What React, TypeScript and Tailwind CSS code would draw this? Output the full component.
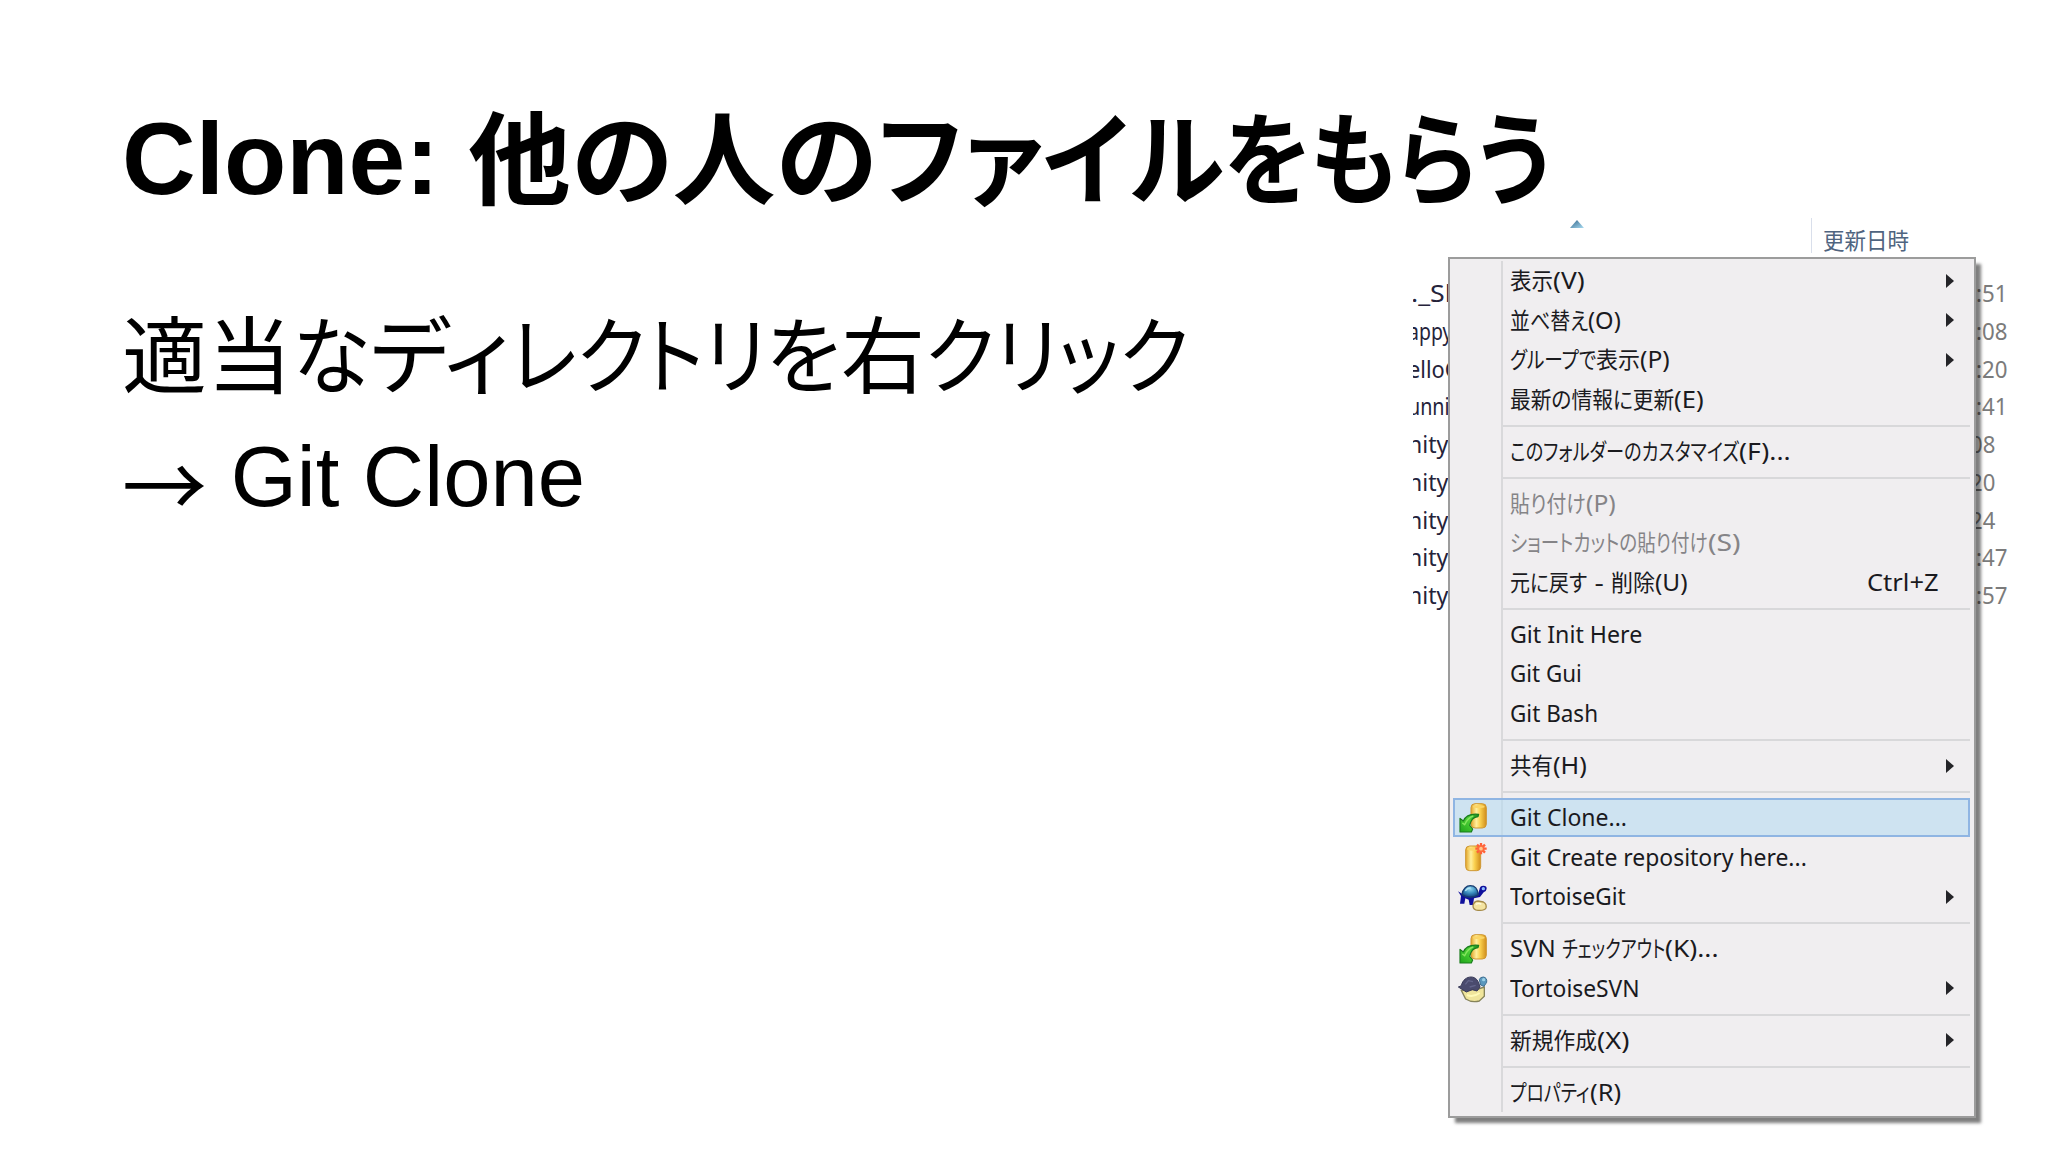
import { ReactNode, useLayoutEffect, useRef, useState } from "react";
import clsx from "clsx";

type Run = [text: string, width: number];

type MenuEntry =
    | "separator"
    | {
          runs: Run[];
          icon?: ReactNode;
          shortcut?: Run;
          submenu?: boolean;
          disabled?: boolean;
          active?: boolean;
      };

// Squeezes or stretches a piece of text so that it fills exactly `width` pixels.
function FitText({ text, width }: { text: string; width: number }) {
    const ref = useRef<HTMLSpanElement>(null);
    const [scale, setScale] = useState(1);

    useLayoutEffect(() => {
        if (ref.current) setScale(width / ref.current.offsetWidth);
    }, [text, width]);

    return (
        <span className="inline-block whitespace-pre" style={{ width }}>
            <span ref={ref} className="inline-block origin-left" style={{ transform: `scaleX(${scale})` }}>
                {text}
            </span>
        </span>
    );
}

function FitLine({ runs }: { runs: Run[] }) {
    return (
        <span className="flex items-baseline">
            {runs.map(([text, width], i) => (
                <FitText key={i} text={text} width={width} />
            ))}
        </span>
    );
}

function Gradients() {
    return (
        <svg className="absolute h-0 w-0" aria-hidden="true">
            <defs>
                <linearGradient id="gold" x1="0" x2="1" y1="0" y2="0">
                    <stop offset="0" stopColor="#e2a52a" />
                    <stop offset="0.35" stopColor="#ffef9c" />
                    <stop offset="0.6" stopColor="#fad04e" />
                    <stop offset="1" stopColor="#d08e1c" />
                </linearGradient>
                <linearGradient id="leaf" x1="0" x2="1" y1="1" y2="0">
                    <stop offset="0" stopColor="#1fa51a" />
                    <stop offset="0.6" stopColor="#4fd238" />
                    <stop offset="1" stopColor="#178a1c" />
                </linearGradient>
                <radialGradient id="shell" cx="0.5" cy="0.3" r="0.7">
                    <stop offset="0" stopColor="#8fd4ee" />
                    <stop offset="0.5" stopColor="#3c8fc0" />
                    <stop offset="1" stopColor="#14407c" />
                </radialGradient>
                <linearGradient id="sort" x1="0" x2="1" y1="0" y2="1">
                    <stop offset="0" stopColor="#2f6288" />
                    <stop offset="1" stopColor="#a9dcf2" />
                </linearGradient>
            </defs>
        </svg>
    );
}

function CheckoutIcon() {
    return (
        <svg viewBox="0 0 90 90" className="size-[30px]">
            <rect x="39" y="2" width="46" height="73" rx="12" fill="url(#gold)" stroke="#cf9733" strokeWidth="3" />
            <ellipse cx="62" cy="11" rx="18" ry="5" fill="#fbd566" />
            <path
                d="M6 46 L16 54 C22 40 36 31 62 34 L60 41 C46 42 38 52 35 67 L44 78 L40 87 L6 87 Z"
                fill="url(#leaf)"
                stroke="#1a7d1c"
                strokeWidth="3.5"
                strokeLinejoin="round"
            />
            <path d="M13 60 L20 65 C27 50 34 42 46 39" fill="none" stroke="#86e65f" strokeWidth="4" />
        </svg>
    );
}

function CreateIcon() {
    return (
        <svg viewBox="0 0 90 90" className="size-[30px]">
            <rect x="23" y="12" width="45" height="74" rx="12" fill="url(#gold)" stroke="#cf9733" strokeWidth="3" />
            <ellipse cx="44" cy="21" rx="17" ry="5" fill="#fbd566" />
            <path d="M69 3 V37 M52 20 H86 M57 8 L81 32 M81 8 L57 32" stroke="#ff6038" strokeWidth="7" />
            <circle cx="69" cy="20" r="8" fill="#ffc48a" stroke="#ff6a3c" strokeWidth="5" />
        </svg>
    );
}

function TortoiseGitIcon() {
    return (
        <svg viewBox="0 0 90 90" className="size-[30px]">
            <path
                d="M0 28 L12 35 H60 L64 24 Q65 11 76 11 Q87 11 86 20 Q85 29 77 31 L66 45 L48 49 L45 69 H35 L32 53 L22 49 L19 65 H6 L9 42 Z"
                fill="#10109c"
            />
            <path d="M12 38 C14 20 26 11 37 11 C50 11 59 21 61 38 C48 48 26 48 12 38 Z" fill="url(#shell)" stroke="#183c70" strokeWidth="4" />
            <path d="M22 27 Q28 17 38 18" fill="none" stroke="#b5e4f4" strokeWidth="4" />
            <circle cx="76" cy="20" r="5" fill="#8cbcff" />
            <path d="M45 71 Q47 58 60 57 L76 60 Q87 66 84 78 Q79 87 60 85 Q45 84 45 71 Z" fill="#f4e3a0" stroke="#a58a48" strokeWidth="4" />
            <path d="M53 67 Q60 63 70 66" fill="none" stroke="#fffbe0" strokeWidth="4" />
        </svg>
    );
}

function TortoiseSvnIcon() {
    return (
        <svg viewBox="0 0 90 90" className="size-[30px] overflow-visible">
            <path d="M10 52 L23 78 Q42 90 64 84 L79 70 L79 42 L61 48 Z" fill="#f0e59c" stroke="#85825a" strokeWidth="4" />
            <path d="M27 66 Q45 74 65 60" fill="none" stroke="#fffab8" strokeWidth="6" />
            <path d="M1 42 L10 38 C14 20 27 12 39 12 C54 12 62 24 66 42 L57 54 L43 50 L25 57 Z" fill="#4a4b6e" stroke="#393a58" strokeWidth="3" />
            <path d="M22 34 L31 23 L45 26 M35 42 L53 37" fill="none" stroke="#63658a" strokeWidth="4" />
            <path d="M64 20 Q66 12 76 12 Q88 14 86 28 L78 40 L68 36 Z" fill="#5a97bd" stroke="#3d6f92" strokeWidth="3" />
            <circle cx="77" cy="20" r="5" fill="#9bd0e6" />
        </svg>
    );
}

const titleRuns: Run[] = [
    ["他の人の", 409],
    ["ファイル", 347],
    ["をもらう", 327]
];

const bodyRuns: Run[] = [
    ["適当", 170],
    ["な", 78],
    ["ディ", 140],
    ["レクトリ", 256],
    ["を", 75],
    ["右", 84],
    ["クリック", 264]
];

const menu: MenuEntry[] = [
    { runs: [["表示", 43], ["(V)", 32]], submenu: true },
    { runs: [["並べ替え", 78], ["(O)", 33]], submenu: true },
    { runs: [["グループで", 86], ["表示", 44], ["(P)", 30]], submenu: true },
    { runs: [["最新の情報に更新", 164], ["(E)", 30]] },
    "separator",
    { runs: [["このフォルダーのカスタマイズ", 229], ["(F)...", 52]] },
    "separator",
    { runs: [["貼り付け", 76], ["(P)", 30]], disabled: true },
    { runs: [["ショートカットの貼り付け", 198], ["(S)", 32]], disabled: true },
    { runs: [["元に戻す", 77], [" - ", 24], ["削除", 44], ["(U)", 33]], shortcut: ["Ctrl+Z", 72] },
    "separator",
    { runs: [["Git Init Here", 132]] },
    { runs: [["Git Gui", 72]] },
    { runs: [["Git Bash", 88]] },
    "separator",
    { runs: [["共有", 43], ["(H)", 34]], submenu: true },
    "separator",
    { runs: [["Git Clone...", 117]], icon: <CheckoutIcon />, active: true },
    { runs: [["Git Create repository here...", 297]], icon: <CreateIcon /> },
    { runs: [["TortoiseGit", 116]], icon: <TortoiseGitIcon />, submenu: true },
    "separator",
    { runs: [["SVN ", 52], ["チェックアウト", 103], ["(K)...", 54]], icon: <CheckoutIcon /> },
    { runs: [["TortoiseSVN", 130]], icon: <TortoiseSvnIcon />, submenu: true },
    "separator",
    { runs: [["新規作成", 87], ["(X)", 32]], submenu: true },
    "separator",
    { runs: [["プロパティ", 80], ["(R)", 31]] }
];

const files: { name: Run; time: Run; short?: boolean }[] = [
    { name: ["._Sh", 50], time: [":51", 31] },
    { name: ["appy", 44], time: [":08", 31] },
    { name: ["elloG", 53], time: [":20", 31] },
    { name: ["unnin", 54], time: [":41", 31] },
    { name: ["nity", 40], time: ["08", 25], short: true },
    { name: ["nity", 40], time: ["20", 25], short: true },
    { name: ["nity", 40], time: ["24", 25], short: true },
    { name: ["nity", 40], time: [":47", 31] },
    { name: ["nity", 40], time: [":57", 31] }
];

function FileList() {
    return (
        <div className="w-full overflow-hidden">
            <div className="flex h-[56px] justify-between pr-[139px]">
                <svg viewBox="0 0 14 8" className="ml-[157px] mt-0.5 h-2 w-3.5">
                    <path d="M0 8 L7 0 L14 8 Z" fill="url(#sort)" />
                </svg>
                <div className="h-[35px] border-l border-[#d9dfeb] pl-[11px] leading-[44px] text-[#4f6480]">
                    <FitLine runs={[["更新日時", 86]]} />
                </div>
            </div>
            {files.map(({ name, time, short }, i) => (
                <div key={i} className="flex h-[37.75px] justify-between leading-[38px]">
                    <div className={clsx("text-[#25233a]", i === 0 ? "-ml-0.5" : "-ml-[5px]")}>
                        <FitLine runs={[name]} />
                    </div>
                    <div className={clsx("text-[#7b7b7b]", short ? "pr-[53px]" : "pr-[41px]")}>
                        <FitLine runs={[time]} />
                    </div>
                </div>
            ))}
        </div>
    );
}

function ContextMenu() {
    return (
        <div className="absolute left-[35px] top-[39px] w-[528px] border-2 border-[#9c9c9c] bg-[#f0eef0] pb-1 pl-[3px] pr-1 pt-0.5 text-[#1a1a1e] shadow-[6px_6px_3px_-1px_rgba(0,0,0,0.5)]">
            <div className="bg-[linear-gradient(to_right,transparent_48px,#d9d9db_48px,#d9d9db_50px,transparent_50px)]">
                {menu.map((entry, i) =>
                    entry === "separator" ? (
                        <div key={i} className="flex h-[12.75px] items-center pl-[50px] pt-px">
                            <div className="h-0.5 w-full bg-[#d8d8da]" />
                        </div>
                    ) : (
                        <div
                            key={i}
                            className={clsx(
                                "flex h-[39.45px] items-center leading-[39px]",
                                entry.active && "bg-[#b3daf2]/55 outline-2 -outline-offset-2 outline-[#8fb5e3]",
                                entry.disabled && "text-[#858487]"
                            )}
                        >
                            <div className="flex w-[57px] shrink-0 pl-[5px]">{entry.icon}</div>
                            <FitLine runs={entry.runs} />
                            <div className="ml-auto flex pr-4">
                                {entry.shortcut && (
                                    <div className="pr-[15px]">
                                        <FitLine runs={[entry.shortcut]} />
                                    </div>
                                )}
                                {entry.submenu && (
                                    <svg viewBox="0 0 8 14" className="h-3.5 w-2">
                                        <path d="M0 0 L8 7 L0 14 Z" fill="#242428" />
                                    </svg>
                                )}
                            </div>
                        </div>
                    )
                )}
            </div>
        </div>
    );
}

export default function App() {
    return (
        <main className="relative h-[1152px] w-[2048px] overflow-hidden bg-white pl-[122px] pt-[95px] font-['Liberation_Sans','Noto_Sans_CJK_JP',sans-serif] text-black [font-feature-settings:'palt']">
            <Gradients />
            <h1 className="flex text-[102px] font-bold leading-[128px]">
                <FitText text="Clone: " width={346} />
                <span className="pt-[3px] text-[101px]">
                    <FitLine runs={titleRuns} />
                </span>
            </h1>
            <div className="mt-[72px] text-[85px] leading-[120px]">
                <p className="text-[84px]">
                    <FitLine runs={bodyRuns} />
                </p>
                <p className="-mt-px flex">
                    <span className="pt-1 font-['Noto_Sans_CJK_JP',sans-serif]">→</span>
                    <span className="whitespace-pre"> Git Clone</span>
                </p>
            </div>

            {/* explorer window with its context menu, laid over the slide */}
            <div className="absolute left-[1413px] top-[218px] w-[635px] font-['Noto_Sans','Noto_Sans_CJK_JP',sans-serif] text-[23px]">
                <FileList />
                <ContextMenu />
            </div>
        </main>
    );
}
